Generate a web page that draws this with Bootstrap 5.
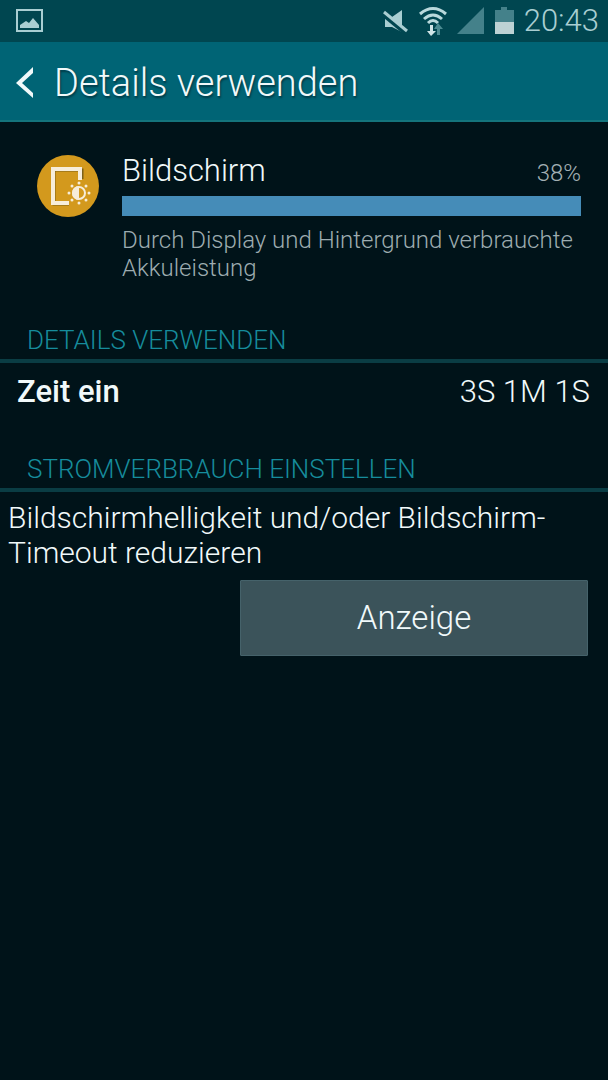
<!DOCTYPE html>
<html lang="de">
<head>
<meta charset="utf-8">
<meta name="viewport" content="width=device-width, initial-scale=1">
<title>Details verwenden</title>
<link href="https://cdn.jsdelivr.net/npm/bootstrap@5.3.0/dist/css/bootstrap.min.css" rel="stylesheet">
<style>
body { background: #001319; color: #f1f9fa; font-family: Roboto, sans-serif; font-weight: 300; font-size: 31px; line-height: 36px; }
.status-bar { background: #004650; color: #a9ced2; height: 42px; padding: 0 9px 0 16px; }
.status-icons { gap: 10px; }
.title-bar { background: #006475; height: 80px; border-bottom: 2px solid #14747c; padding: 4px 16px 0; gap: 20px; }
.title-bar h1 { font-size: 38px; line-height: 44px; font-weight: 300; text-shadow: 1px 2px 2px #003a46; }
.usage { padding: 31px 27px 0 36px; gap: 22px; }
.usage h2 { font-size: 31px; line-height: 36px; font-weight: 300; }
.percent { font-size: 24px; line-height: 28px; color: #a3b0b4; }
.usage .progress { height: 20px; margin: 7px 0 10px; border-radius: 0; background: #458cb8; }
.usage .progress-bar { background: #458cb8; }
.note { font-size: 24px; line-height: 28px; color: #9dacb0; }
.block { margin-top: 44px; }
.section-title { font-size: 26px; line-height: 28px; font-weight: 300; color: #168c9c; padding: 0 27px 5px; border-bottom: 4px solid #0a3d44; }
.time-row { padding: 11px 18px 1px 17px; }
.time-label { font-weight: 500; }
.advice { padding: 8px; font-size: 30px; line-height: 35px; }
.action { padding: 2px 20px 0; }
.action .btn { width: 348px; height: 76px; font-size: 33px; font-weight: 300; color: #f1f9fa; background: #3b535a; border: 1px solid #45626a; border-radius: 1px; }
</style>
</head>
<body>
<header>
  <div class="status-bar d-flex align-items-center justify-content-between">
    <svg width="28" height="24" viewBox="0 0 28 24" fill="none" aria-label="Bild"><path d="M1 1h25v21H1z" stroke="#a9ced2" stroke-width="2"/><path d="M4 19v-3l6-4 3 2 4-5 6 7v3z" fill="#a9ced2"/></svg>
    <div class="status-icons d-flex align-items-center">
      <svg width="26" height="26" viewBox="0 0 26 26" aria-label="Stumm"><path d="M2 9h7l10-7v22L9 19H2z" fill="#a9ced2"/><path d="M0 6l23 19" stroke="#004650" stroke-width="5"/><path d="M1 4l23 19" stroke="#a9ced2" stroke-width="3"/></svg>
      <svg width="28" height="30" viewBox="0 0 28 30" fill="none" aria-label="WLAN"><g stroke="#b9d9dc" stroke-width="3"><path d="M1 8q13-11 26 0"/><path d="M5 13q9-8 18 0"/><path d="M9 17q5-5 10 0"/></g><path d="M11 19h3v6h3l-5 5-4-5h3z" fill="#d0e5e7"/><path d="M18 29v-6h-3l4-6 5 6h-3v6z" fill="#4b8b92"/></svg>
      <svg width="28" height="28" viewBox="0 0 28 28" aria-label="Signal"><path d="M0 27L27 0v27z" fill="#44818a"/></svg>
      <svg width="19" height="28" viewBox="0 0 19 28" aria-label="Akku"><path d="M0 3h6V0h6v3h7v12H0z" fill="#44818a"/><path d="M0 15h19v12H0z" fill="#bdd2d4"/></svg>
      <span>20:43</span>
    </div>
  </div>
  <nav class="title-bar d-flex align-items-center" aria-label="Titelleiste">
    <a href="#" class="d-flex" aria-label="Zurück"><svg width="18" height="32" viewBox="0 0 18 32"><path d="M17 0v6L6 16l11 10v5L0 16z" fill="#f1f9fa"/></svg></a>
    <h1 class="m-0">Details verwenden</h1>
  </nav>
</header>
<main>
  <section class="usage d-flex">
    <svg class="flex-shrink-0" width="64" height="64" viewBox="0 0 64 64" fill="none" aria-hidden="true">
      <circle cx="32" cy="33" r="31" fill="#d3991d"/>
      <path d="M46 26V17H18v34h15" stroke="#7c6119" stroke-width="3"/>
      <path d="M44 27V16H17v34h16" stroke="#f7edda" stroke-width="4"/>
      <circle cx="43" cy="40" r="6" stroke="#f7edda" stroke-width="2"/>
      <path d="M43 33a7 7 0 0 0 0 14z" fill="#f7edda"/>
      <g fill="#f7edda"><circle cx="43" cy="30" r="1.500"/><circle cx="50" cy="33" r="1.500"/><circle cx="53" cy="40" r="1.500"/><circle cx="50" cy="47" r="1.500"/><circle cx="43" cy="50" r="1.500"/><circle cx="36" cy="47" r="1.500"/><circle cx="33" cy="40" r="1.500"/><circle cx="36" cy="33" r="1.500"/></g>
    </svg>
    <div class="flex-grow-1">
      <div class="d-flex justify-content-between align-items-baseline">
        <h2 class="m-0">Bildschirm</h2>
        <span class="percent">38%</span>
      </div>
      <div class="progress" role="progressbar" aria-label="Bildschirm" aria-valuenow="38" aria-valuemin="0" aria-valuemax="38"><div class="progress-bar w-100"></div></div>
      <p class="note m-0">Durch Display und Hintergrund verbrauchte Akkuleistung</p>
    </div>
  </section>
  <section class="block">
    <h3 class="section-title mb-0">DETAILS VERWENDEN</h3>
    <div class="time-row d-flex justify-content-between">
      <span class="time-label">Zeit ein</span>
      <span>3S 1M 1S</span>
    </div>
  </section>
  <section class="block">
    <h3 class="section-title mb-0">STROMVERBRAUCH EINSTELLEN</h3>
    <p class="advice m-0">Bildschirmhelligkeit und/oder Bildschirm-Timeout reduzieren</p>
    <div class="action d-flex justify-content-end">
      <button type="button" class="btn">Anzeige</button>
    </div>
  </section>
</main>
<script src="https://cdn.jsdelivr.net/npm/bootstrap@5.3.0/dist/js/bootstrap.bundle.min.js"></script>
</body>
</html>
